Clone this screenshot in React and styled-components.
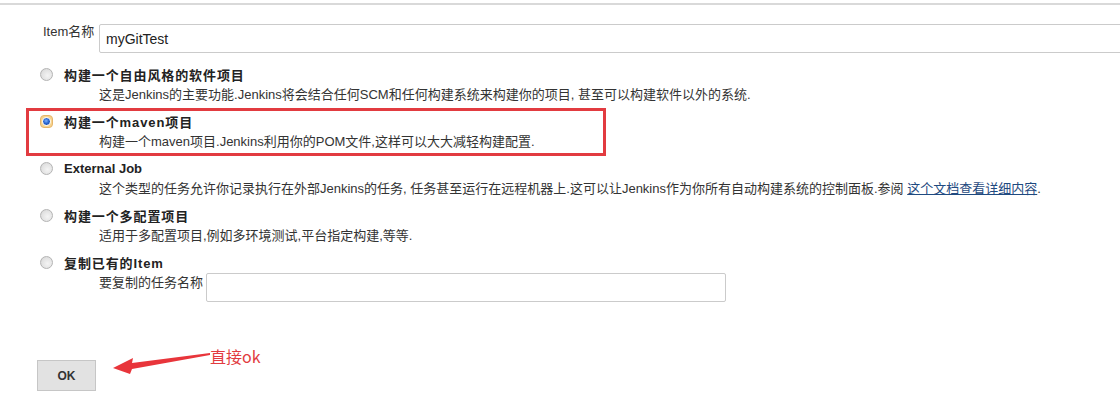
import styled, { createGlobalStyle } from "styled-components";

const GlobalStyle = createGlobalStyle`
body{
  margin:0;
  background:#fff;
  font-family:"Liberation Sans","Noto Sans CJK SC",sans-serif;
  font-size:13px;
  color:#333;
}
`;

const Page = styled.div`
margin-top:3px;
border-top:2px solid #d9d9d9;
overflow:hidden;
height:401px;
`;

const NameRow = styled.div`
display:flex;
align-items:flex-start;
padding:19px 0 0 43px;
`;

const FieldLabel = styled.label`
width:56px;
flex:none;
line-height:14px;
padding-top:1px;
color:#333;
`;

const TextBox = styled.input`
box-sizing:border-box;
flex:none;
height:${(p) => p.h || 29}px;
width:${(p) => p.w}px;
border:1px solid #cbcbcb;
border-radius:2px;
padding:0 6px;
font-family:"Liberation Sans","Noto Sans CJK SC",sans-serif;
font-size:14px;
color:#222;
outline:none;
`;

const Options = styled.div`
display:flex;
flex-direction:column;
gap:6px;
margin-top:11px;
`;

const Option = styled.div`
position:relative;
&::after{
  content:"";
  display:${(p) => (p.highlight ? "block" : "none")};
  position:absolute;
  left:26px;
  top:-3px;
  bottom:-4px;
  width:580px;
  box-sizing:border-box;
  border:3px solid #e23b40;
  pointer-events:none;
}
`;

const TitleRow = styled.div`
display:flex;
align-items:center;
padding-left:40px;
gap:11px;
height:20px;
`;

const Radio = styled.span`
box-sizing:border-box;
width:13px;
height:13px;
border-radius:${(p) => (p.checked ? "4px" : "50%")};
border:1px solid ${(p) => (p.checked ? "#e6b56a" : "#b4b4b4")};
background:${(p) =>
  p.checked
    ? "#f6d38f"
    : "radial-gradient(circle at 60% 60%, #f4f4f4 0, #e2e2e2 60%, #cfcfcf 100%)"};
display:flex;
align-items:center;
justify-content:center;
&::after{
  content:"";
  display:${(p) => (p.checked ? "block" : "none")};
  width:9px;
  height:9px;
  box-sizing:border-box;
  border-radius:50%;
  border:1px solid #fff;
  background:radial-gradient(circle at 45% 40%, #7fb4ff 0, #2a66d0 45%, #123f93 100%);
}
`;

const Title = styled.span`
font-weight:bold;
color:#222;
letter-spacing:${(p) => (p.latin ? "0" : "0.9px")};
`;

const Desc = styled.div`
margin-top:1px;
padding-left:99px;
line-height:20px;
color:#333;
white-space:nowrap;
`;

const DocLink = styled.a`
color:#1f4a80;
text-decoration:underline;
`;

const CopyRow = styled.div`
display:flex;
align-items:flex-start;
margin-top:1px;
padding-left:99px;
gap:3px;
`;

const CopyLabel = styled.span`
line-height:16px;
padding-top:2px;
`;

const Footer = styled.div`
display:flex;
align-items:flex-start;
margin-top:44px;
padding-left:37px;
`;

const OkButton = styled.button`
margin-top:14px;
width:59px;
height:31px;
background:#e2e2e2;
border:1px solid #c6c6c6;
border-radius:0;
font-family:"Liberation Sans",sans-serif;
font-size:12px;
font-weight:bold;
color:#333;
`;

const ArrowMark = styled.svg`
margin-left:16px;
flex:none;
`;

const Note = styled.span`
font-size:16px;
line-height:20px;
color:#e23b40;
font-family:"Noto Sans CJK SC","Liberation Sans",sans-serif;
`;

const items = [
  {
    title: "构建一个自由风格的软件项目",
    desc: "这是Jenkins的主要功能.Jenkins将会结合任何SCM和任何构建系统来构建你的项目, 甚至可以构建软件以外的系统.",
  },
  {
    title: "构建一个maven项目",
    desc: "构建一个maven项目.Jenkins利用你的POM文件,这样可以大大减轻构建配置.",
    checked: true,
  },
  {
    title: "External Job",
    latin: true,
    desc: (
      <>
        这个类型的任务允许你记录执行在外部Jenkins的任务, 任务甚至运行在远程机器上.这可以让Jenkins作为你所有自动构建系统的控制面板.参阅{" "}
        <DocLink href="#">这个文档查看详细内容</DocLink>.
      </>
    ),
  },
  {
    title: "构建一个多配置项目",
    desc: "适用于多配置项目,例如多环境测试,平台指定构建,等等.",
  },
];

const App = () => {
  return (
    <Page>
      <GlobalStyle />
      <NameRow>
        <FieldLabel>Item名称</FieldLabel>
        <TextBox w={1060} defaultValue="myGitTest" />
      </NameRow>

      <Options>
        {items.map((it) => (
          <Option key={it.title} highlight={it.checked}>
            <TitleRow>
              <Radio checked={it.checked} />
              <Title latin={it.latin}>{it.title}</Title>
            </TitleRow>
            <Desc>{it.desc}</Desc>
          </Option>
        ))}
        <Option>
          <TitleRow>
            <Radio />
            <Title>复制已有的Item</Title>
          </TitleRow>
          <CopyRow>
            <CopyLabel>要复制的任务名称</CopyLabel>
            <TextBox w={520} />
          </CopyRow>
        </Option>
      </Options>

      <Footer>
        <OkButton>OK</OkButton>
        <ArrowMark width="98" height="32" viewBox="0 0 98 32">
          <polygon
            points="1,22 21,12 20,17 98,7 98,9 20,23 18,28"
            fill="#e8353b"
          />
        </ArrowMark>
        <Note>直接ok</Note>
      </Footer>
    </Page>
  );
};

export default App;
